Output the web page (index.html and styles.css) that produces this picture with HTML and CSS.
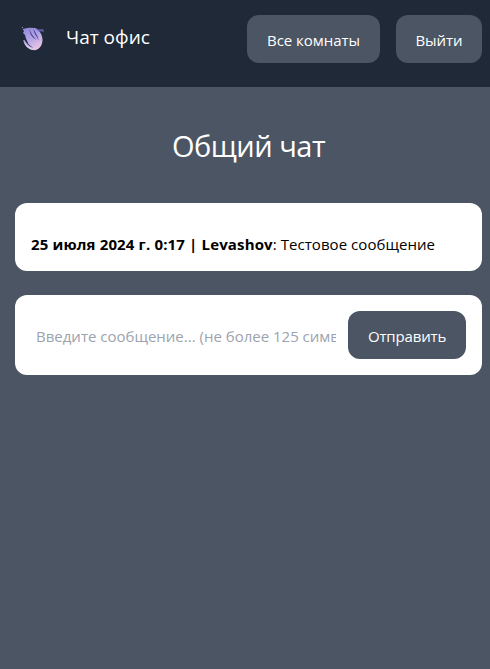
FILE: index.html
```html
<!DOCTYPE html>
<html lang="ru">
<head>
<meta charset="utf-8">
<title>Чат офис</title>
<link rel="stylesheet" href="styles.css">
</head>
<body>
<header class="header">
  <a class="brand">
    <svg class="logo" viewBox="0 0 24 26">
      <defs>
        <linearGradient id="petal" x1="0" y1="0" x2=".5" y2="1">
          <stop offset="0" stop-color="#8f86d6"/>
          <stop offset=".5" stop-color="#aea2e8"/>
          <stop offset="1" stop-color="#e6c2e4"/>
        </linearGradient>
      </defs>
      <path fill="url(#petal)" d="M1.500 4L8 2.800L14 3C18 5 21.500 9 21.500 15C21.500 20 18.500 24.500 14 25.200C9 25.300 5 22 2.300 15.300L3.200 14.800C5 17 6.500 18.500 7.500 19C6 16 4.500 13 4 10L2 8L3 6Z"/>
      <path fill="#4d458e" d="M8.500 3.500C9.500 8 12 11 15.500 15C11 12.500 8.500 9 8.500 3.500ZM12.500 3.500C14 8 17 10 17.500 15.500C16 11 12.500 9 12.500 3.500Z"/>
      <path fill="#332f62" d="M3.500 14.500C6 18 9 20.500 12.200 23C8 21.500 5 18.500 3.500 14.500Z"/>
      <path fill="#ded5f5" d="M2.300 15.500C4.500 19.500 7.500 22.500 12.500 25C7 24.500 3.500 20.500 2.300 15.500Z"/>
      <path fill="#6861a8" d="M14 3.200L19 4.500L22.300 4L22.800 7.500L21 6.200L18 6.500Z"/>
      <circle cx="1.500" cy="2.300" r=".5" fill="#cfc9ef"/>
    </svg>
    <span class="brand-name">Чат офис</span>
  </a>
  <nav class="nav">
    <a class="button rooms">Все комнаты</a>
    <a class="button logout">Выйти</a>
  </nav>
</header>
<main class="main">
  <h1 class="title">Общий чат</h1>
  <section class="card messages">
    <p class="message"><b>25 июля 2024 г. 0:17 | Levashov</b><span class="body">: Тестовое сообщение</span></p>
  </section>
  <form class="card composer">
    <input class="field" type="text" placeholder="Введите сообщение... (не более 125 символов)">
    <button class="button send" type="button">Отправить</button>
  </form>
</main>
</body>
</html>
```
FILE: styles.css
```css
* { box-sizing: border-box; }
body {
  margin: 0;
  min-height: 100vh;
  background: #4b5563;
  font: 15px/24px "Segoe UI", "Open Sans", "Noto Sans", sans-serif;
}
.header {
  display: flex;
  justify-content: space-between;
  height: 87px;
  padding: 15px 8px 24px 21px;
  background: #1f2937;
  color: #fff;
}
.brand { display: flex; align-items: flex-start; gap: 21px; }
.logo { width: 24px; height: 26px; margin-top: 10px; }
.brand-name { margin-top: 8px; font-size: 19px; line-height: 28px; }
.nav { display: flex; gap: 16px; }
.button {
  display: flex;
  align-items: center;
  justify-content: center;
  flex: none;
  height: 48px;
  padding: 1px 0 0;
  border: 0;
  border-radius: 12px;
  background: #4b5563;
  color: #fff;
  font: inherit;
  letter-spacing: -0.05px;
  white-space: nowrap;
}
.rooms { width: 133px; }
.logout { width: 86px; }
.send { width: 118px; letter-spacing: -0.15px; }
.main { padding: 41px 8px 0 15px; }
.title {
  margin: 0 0 39px;
  color: #fff;
  font-size: 29px;
  font-weight: 400;
  letter-spacing: -0.5px;
  line-height: 36px;
  text-align: center;
}
.card { border-radius: 12px; background: #fff; }
.messages { height: 68px; margin-bottom: 24px; padding: 29px 16px 0; }
.message { margin: 0; color: #000; white-space: nowrap; }
.message b { letter-spacing: 0.15px; }
.body { letter-spacing: 0.05px; }
.composer { display: flex; gap: 12px; height: 80px; padding: 16px 16px 16px 21px; }
.field {
  flex: 1;
  min-width: 0;
  padding: 1px 0 0;
  border: 0;
  outline: 0;
  background: transparent;
  color: #000;
  font: inherit;
}
.field::placeholder { color: #9ca3af; opacity: 1; }
```
